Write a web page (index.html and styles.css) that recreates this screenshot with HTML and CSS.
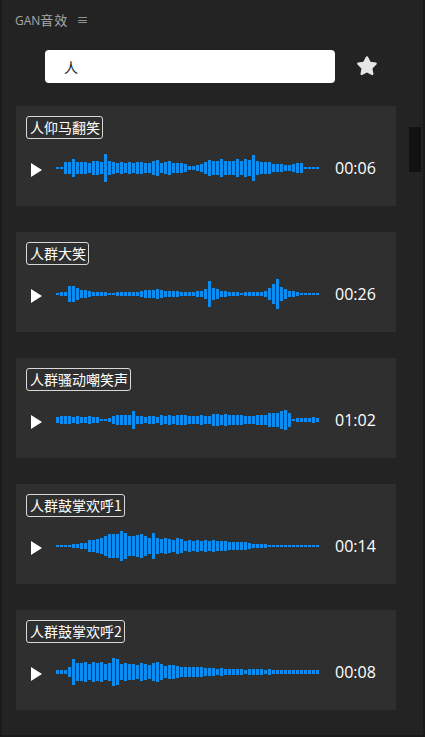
FILE: index.html
```html
<!DOCTYPE html>
<html>
<head>
    <meta charset="utf-8">
    <title>GAN音效</title>
    <link rel="stylesheet" href="styles.css">
</head>
<body>
    <div class="app">
        <div class="head">GAN<span class="cn">音效</span><span class="menu">≡</span></div>
        <div class="search">
            <input type="text" class="ipt" value="人" />
            <svg class="star" width="24" height="24" viewBox="0 0 24 24">
                <path d="M12 2.2c.5 0 .9.3 1.1.7l2.4 4.9 5.3.8c1 .1 1.3 1.3.6 2l-3.9 3.8.9 5.3c.2 1-.8 1.7-1.7 1.2L12 18.4l-4.8 2.5c-.9.5-1.9-.3-1.7-1.2l.9-5.3-3.9-3.8c-.7-.7-.3-1.9.6-2l5.3-.8 2.4-4.9c.3-.4.7-.7 1.2-.7z" fill="#e6e6e6"/>
            </svg>
        </div>
        <div class="list">
            <div class="card" data-wave="0">
                <span class="tag">人仰马翻笑</span>
                <div class="row"><i class="play"></i><div class="wave"></div><span class="time">00:06</span></div>
            </div>
            <div class="card" data-wave="1">
                <span class="tag">人群大笑</span>
                <div class="row"><i class="play"></i><div class="wave"></div><span class="time">00:26</span></div>
            </div>
            <div class="card" data-wave="2">
                <span class="tag">人群骚动嘲笑声</span>
                <div class="row"><i class="play"></i><div class="wave"></div><span class="time">01:02</span></div>
            </div>
            <div class="card" data-wave="3">
                <span class="tag">人群鼓掌欢呼1</span>
                <div class="row"><i class="play"></i><div class="wave"></div><span class="time">00:14</span></div>
            </div>
            <div class="card" data-wave="4">
                <span class="tag">人群鼓掌欢呼2</span>
                <div class="row"><i class="play"></i><div class="wave"></div><span class="time">00:08</span></div>
            </div>
        </div>
        <div class="thumb"></div>
    </div>

    <script type="text/javascript">
        // 波形包络 [位置, 高度]
        var waves = [
            {pts: [[0,2],[5,2],[6,12],[20,14],[45,14],[60,12],[100,14],[125,10],[132,4],[142,5],[150,16],[170,17],[190,18],[210,12],[230,8],[245,10],[248,2],[262,2]], spikes: {48:28, 196:26, 16:18}},
            {pts: [[0,2],[8,4],[10,18],[14,20],[25,8],[40,4],[60,3],[80,4],[95,10],[100,12],[110,6],[130,4],[145,8],[150,18],[155,14],[165,6],[185,3],[205,3],[212,14],[218,22],[225,12],[240,4],[262,2]], spikes: {152:26, 220:30}},
            {pts: [[0,8],[40,8],[42,2],[50,3],[55,8],[65,12],[75,14],[85,8],[100,9],[120,10],[150,10],[155,14],[170,12],[190,8],[210,12],[225,16],[232,16],[234,3],[250,4],[255,6],[258,3],[262,3]], spikes: {76:18, 228:20}},
            {pts: [[0,2],[15,3],[25,6],[35,12],[45,18],[55,26],[65,28],[75,24],[85,22],[95,20],[110,16],[130,14],[150,12],[170,10],[185,8],[200,5],[210,3],[262,2]], spikes: {96:26}},
            {pts: [[0,4],[8,6],[12,12],[16,20],[25,18],[35,22],[50,22],[58,26],[65,20],[80,18],[100,18],[110,12],[120,14],[130,12],[140,10],[160,8],[180,6],[200,6],[220,5],[232,3],[262,3]], spikes: {16:26, 56:28}}
        ];
        var seed = 7;
        function rnd(){
            seed = (seed * 9301 + 49297) % 233280;
            return seed / 233280;
        }
        function amp(pts, x){
            for (var i = 1; i < pts.length; i++) {
                if (x <= pts[i][0]) {
                    var a = pts[i-1], b = pts[i];
                    return a[1] + (b[1] - a[1]) * (x - a[0]) / (b[0] - a[0]);
                }
            }
            return pts[pts.length-1][1];
        }
        var cards = document.querySelectorAll(".card");
        for (var c = 0; c < cards.length; c++) {
            var w = waves[cards[c].getAttribute("data-wave")];
            var box = cards[c].querySelector(".wave");
            var html = "";
            for (var x = 0; x < 262; x += 4) {
                var h = amp(w.pts, x);
                if (h > 3) h = h * (0.75 + 0.35 * rnd());
                for (var k in w.spikes) {
                    if (Math.abs(k - x) < 2.5) h = w.spikes[k];
                }
                h = Math.max(2, Math.round(h / 2) * 2);
                html += '<b style="height:' + h + 'px"></b>';
            }
            box.innerHTML = html;
        }
    </script>
</body>
</html>
```

FILE: styles.css
```css
*{
	margin: 0;
	padding: 0;
	box-sizing: border-box;
}
body{
	background-color: #232323;
	font-family: "Open Sans", "Noto Sans CJK SC", sans-serif;
}
.app{
	position: relative;
	height: 737px;
	padding: 0 27px 0 14px;
	border-left: 2px solid #1a1a1a;
	border-right: 2px solid #1a1a1a;
	border-bottom: 2px solid #1a1a1a;
	overflow: hidden;
}
.head{
	height: 40px;
	padding-top: 11px;
	font-size: 12px;
	color: #a8a8a8;
	line-height: 18px;
	margin-left: -1px;
}
.cn{
	font-family: "Noto Sans CJK SC", sans-serif;
	font-size: 13px;
	letter-spacing: 1px;
}
.menu{
	margin-left: 8px;
	font-size: 12px;
}
.search{
	display: flex;
	align-items: center;
	height: 33px;
	margin-top: 10px;
}
.ipt{
	width: 290px;
	height: 33px;
	margin-left: 29px;
	border: 0;
	outline: 0;
	border-radius: 4px;
	background-color: #fff;
	padding-left: 19px;
	font-size: 14px;
	color: #222;
	font-family: "Noto Sans CJK SC", sans-serif;
}
.star{
	margin-left: 20px;
	margin-top: -1px;
}
.list{
	margin-top: 23px;
	display: flex;
	flex-direction: column;
	gap: 26px;
}
.card{
	width: 380px;
	height: 100px;
	background-color: #2f2f2f;
	padding: 10px 10px 0 10px;
}
.tag{
	display: inline-block;
	height: 23px;
	line-height: 20px;
	padding: 0 2px 0 3px;
	border: 1px solid #d8d8d8;
	border-radius: 3px;
	color: #fff;
	font-size: 14px;
	font-family: "Noto Sans CJK SC", sans-serif;
}
.row{
	display: flex;
	align-items: center;
	height: 32px;
	margin-top: 13px;
}
.play{
	width: 0;
	height: 0;
	margin-left: 5px;
	margin-top: 4px;
	border-top: 7px solid transparent;
	border-bottom: 7px solid transparent;
	border-left: 11px solid #fff;
}
.wave{
	display: flex;
	align-items: center;
	gap: 1px;
	width: 264px;
	height: 32px;
	margin-left: 14px;
}
.wave b{
	width: 3px;
	flex: none;
	background-color: #0b8cf0;
}
.time{
	margin-left: 15px;
	font-size: 16px;
	color: #fff;
}
.thumb{
	position: absolute;
	left: 407px;
	top: 127px;
	width: 12px;
	height: 45px;
	background-color: #111;
}
```
